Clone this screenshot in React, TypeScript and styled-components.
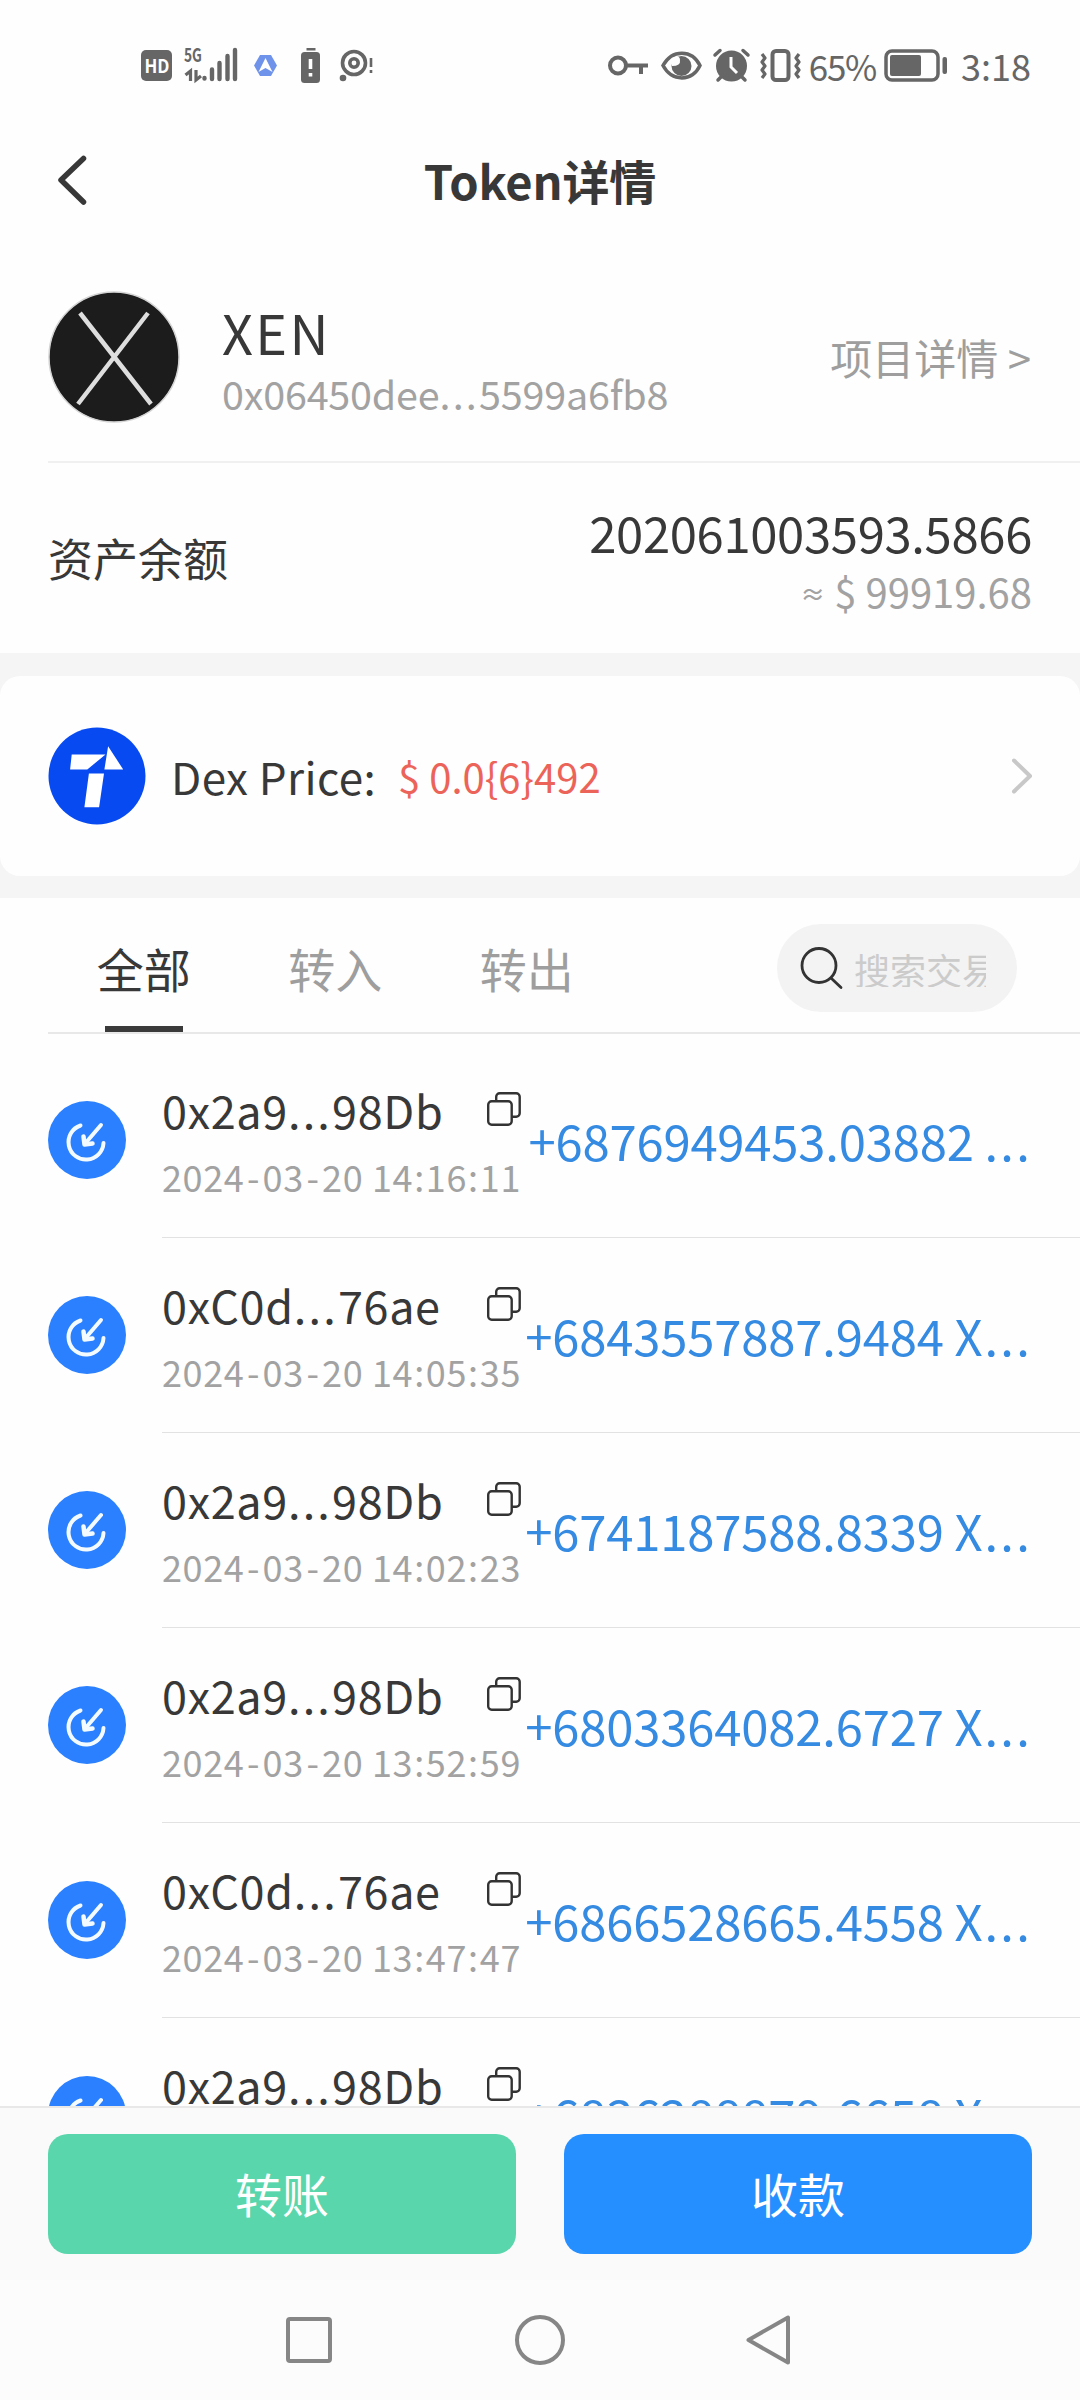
import React from 'react';
import styled, { createGlobalStyle } from 'styled-components';

const Global = createGlobalStyle`
  html, body { margin: 0; padding: 0; background: #fefefe; }
  * { box-sizing: border-box; }
`;

const Screen = styled.div`
  width: 1080px;
  height: 2400px;
  display: flex;
  flex-direction: column;
  overflow: hidden;
  background: #fefefe;
  color: #383838;
  font-family: "Noto Sans CJK SC", "Noto Sans", sans-serif;
  white-space: nowrap;
  svg { display: block; flex: none; overflow: visible; }
`;

const Txt = styled.span<{ $size: number; $ls?: number; $color?: string; $bold?: boolean }>`
  font-size: ${p => p.$size}px;
  line-height: 1;
  letter-spacing: ${p => p.$ls ?? 0}px;
  color: ${p => p.$color ?? '#383838'};
  font-weight: ${p => (p.$bold ? 700 : 400)};
`;

const Dots = styled.span`
  letter-spacing: 2.2px;
`;
const Approx = styled.span`
  font-size: 25px;
  font-weight: 500;
  vertical-align: 4px;
`;
const Separator = styled.span<{ $pad: number }>`
  padding: 0 ${p => p.$pad}px;
`;

const StatusBar = styled.header`
  height: 130px;
  flex: none;
  display: flex;
  justify-content: space-between;
  align-items: center;
  padding: 0 49px 0 140px;
`;
const StatusGroup = styled.div<{ $gap: number }>`
  display: flex;
  align-items: center;
  gap: ${p => p.$gap}px;
`;

const TitleBar = styled.div`
  height: 106px;
  flex: none;
  display: grid;
  grid-template-columns: 120px 1fr 120px;
  align-items: center;
  padding: 0 0 6px;
`;
const BackButton = styled.button`
  border: 0;
  background: none;
  padding: 0 0 0 56px;
`;
const Title = styled.h1`
  margin: 0;
  padding-bottom: 1px;
  display: flex;
  justify-content: center;
`;

const TokenRow = styled.section`
  height: 227px;
  flex: none;
  display: flex;
  align-items: center;
  margin-left: 48px;
  padding: 16px 49px 0 0;
  border-bottom: 2px solid #f0f0f0;
`;
const TokenNames = styled.div`
  display: flex;
  flex-direction: column;
  gap: 14px;
  margin-left: 42px;
  padding-top: 4px;
  flex: 1;
`;
const BalanceRow = styled.section`
  height: 190px;
  flex: none;
  display: flex;
  justify-content: space-between;
  align-items: center;
  padding: 0 48px;
`;
const BalanceLabel = styled.div`
  display: flex;
  padding-bottom: 1px;
`;
const BalanceValues = styled.div`
  display: flex;
  flex-direction: column;
  align-items: flex-end;
  gap: 15px;
  padding-top: 2px;
`;

const DexBand = styled.section`
  background: #f5f5f5;
  padding: 23px 0 22px;
  flex: none;
`;
const DexCard = styled.div`
  height: 200px;
  border-radius: 20px;
  background: #fefefe;
  display: flex;
  align-items: center;
  padding: 0 47px 0 48px;
`;
const DexLabel = styled.div`
  display: flex;
  align-items: center;
  gap: 22px;
  margin-left: 25px;
  padding-bottom: 1px;
  flex: 1;
`;

const FilterBar = styled.nav`
  height: 136px;
  flex: none;
  margin-left: 48px;
  border-bottom: 2px solid #e8e8e8;
  display: flex;
  justify-content: space-between;
  padding-right: 63px;
`;
const Tabs = styled.div`
  display: flex;
`;
const Tab = styled.button<{ $active?: boolean }>`
  width: 191.5px;
  border: 0;
  background: none;
  padding: 46px 0 0;
  font: inherit;
  display: flex;
  flex-direction: column;
  align-items: center;
  justify-content: space-between;
  &::after {
    content: '';
    width: 78px;
    height: 6px;
    background: ${p => (p.$active ? '#3a3a3a' : 'transparent')};
  }
`;
const Search = styled.div`
  width: 240px;
  height: 88px;
  margin-top: 26px;
  border-radius: 44px;
  background: #f3f3f3;
  display: flex;
  align-items: center;
  gap: 11px;
  padding: 1px 30px 0 24px;
`;
const SearchHint = styled.div`
  width: 132px;
  overflow: hidden;
  display: flex;
`;

const List = styled.main`
  flex: 1;
  min-height: 0;
  overflow: hidden;
  padding-top: 9px;
`;
const Item = styled.article`
  height: 195px;
  display: flex;
  align-items: center;
  padding-left: 48px;
`;
const ItemIcon = styled.div`
  padding-bottom: 1px;
`;
const ItemBody = styled.div`
  flex: 1;
  height: 195px;
  margin-left: 36px;
  border-bottom: 1px solid #e2e2e2;
  display: flex;
  justify-content: space-between;
  align-items: center;
  padding-right: 48px;
`;
const ItemInfo = styled.div`
  width: 359px;
  display: flex;
  flex-direction: column;
  gap: 26px;
`;
const ItemHead = styled.div`
  display: flex;
  justify-content: space-between;
  align-items: flex-start;
`;
const ItemAmount = styled.div`
  display: flex;
  padding-bottom: 2px;
`;
const Unit = styled.span`
  letter-spacing: 2px;
`;

const Actions = styled.footer`
  height: 174px;
  flex: none;
  display: flex;
  gap: 48px;
  padding: 26px 48px 0;
  background: #fafafa;
  border-top: 2px solid #e8e8e8;
`;
const ActionButton = styled.button<{ $bg: string }>`
  flex: 1;
  height: 120px;
  border: 0;
  border-radius: 20px;
  background: ${p => p.$bg};
  font-family: inherit;
  padding: 0 0 2px;
`;
const NavBar = styled.div`
  height: 120px;
  flex: none;
  display: flex;
  justify-content: center;
  align-items: center;
  gap: 179px;
  background: #fcfcfc;
`;

const G = '#666';

const StatusLeft = () => (
  <StatusGroup $gap={0}>
    <svg width="240" height="44" viewBox="140 43 240 44" fill={G} fontFamily="Noto Sans CJK SC">
      <rect x="141" y="50" width="31" height="31" rx="5" />
      <text x="144.500" y="73" fontSize="19" fontWeight="700" fill="#fff" textLength="25" lengthAdjust="spacingAndGlyphs">HD</text>
      <text x="184" y="62" fontSize="19" fontWeight="700" textLength="18" lengthAdjust="spacingAndGlyphs">5G</text>
      <path d="M190.500 81V71l-5 4M196 70v10l5-4" fill="none" stroke={G} strokeWidth="3.200" />
      <path d="M204.500 78v.5M212 69.500v9.500M219.500 63v16M227.500 56v23M235 50v29" fill="none" stroke={G} strokeWidth="4.400" strokeLinecap="round" />
      <path d="M260 55h11l6 10.500-6 10.500h-11l-6-10.500z" fill="#6f93ea" />
      <path d="M265.500 58l7 14-7-4-7 4z" fill="#fff" />
      <rect x="306.500" y="48" width="9" height="2.500" />
      <rect x="301" y="52" width="19" height="31" rx="3.500" />
      <path d="M310.500 59v10M310.500 73v3.500" stroke="#fff" strokeWidth="3.600" />
      <circle cx="354" cy="63" r="11.500" fill="none" stroke={G} strokeWidth="3.600" />
      <circle cx="354" cy="63" r="4.200" fill="none" stroke={G} strokeWidth="3.600" />
      <circle cx="343" cy="78" r="3.300" />
      <path d="M371 58v9M371 70v3" stroke={G} strokeWidth="2.600" />
    </svg>
  </StatusGroup>
);

const StatusRight = () => (
  <StatusGroup $gap={9}>
    <svg width="194" height="44" viewBox="607 43 194 44" fill="none" stroke={G} strokeWidth="4">
      <circle cx="619" cy="65.500" r="8" />
      <path d="M627 65.500h22M642 66v8" />
      <path d="M664 65.500C673 49 693 49 701 65.500C693 82 673 82 664 65.500z" strokeWidth="3.500" />
      <circle cx="682.500" cy="66" r="10" fill={G} stroke="none" />
      <path d="M673 58q8-4 8 2q1 6-8 6z" fill="#fefefe" stroke="none" />
      <circle cx="732.500" cy="66" r="15.500" fill={G} stroke="none" />
      <path d="M716 55l5-4.500M749 55l-5-4.500M719 80l5-5M746 80l-5-5" strokeLinecap="round" strokeWidth="3.500" />
      <path d="M732 57v10l6 6" stroke="#fefefe" strokeWidth="3" />
      <rect x="773.500" y="51" width="16" height="29" rx="3.500" />
      <path d="M763 54l3 4-3 4 3 4-3 4 3 4-3 4M800 54l-3 4 3 4-3 4 3 4-3 4 3 4" strokeWidth="3.200" strokeLinejoin="round" />
    </svg>
    <Txt $size={35} $ls={-1.300} $color={G}>65%</Txt>
    <svg width="67" height="44" viewBox="886 43 67 44">
      <rect x="887" y="51" width="52" height="29" rx="6" fill="none" stroke={G} strokeWidth="3.500" />
      <rect x="891" y="55" width="31" height="21" rx="2" fill={G} />
      <rect x="943.500" y="57" width="4.500" height="17" rx="2" fill={G} />
    </svg>
    <Txt $size={36} $color={G}>3:18</Txt>
  </StatusGroup>
);

const ReceiveIcon = () => (
  <svg width="78" height="78" viewBox="0 0 78 78" fill="none" stroke="#f4fbff" strokeWidth="4" strokeLinecap="round">
    <circle cx="39" cy="39" r="39" fill="#2b80ff" stroke="none" />
    <path d="M32.500 24.500A17.500 17.500 0 1 0 55.500 42" />
    <path d="M53 24L38 41.500" />
    <path d="M35.500 35.500L36.500 43.500L44.500 42.500" strokeLinejoin="round" strokeWidth="4.500" />
  </svg>
);

const CopyIcon = () => (
  <svg width="34" height="39" viewBox="0 -5 34 39" fill="none" stroke="#333" strokeWidth="2.400">
    <rect x="1.200" y="9.200" width="23.500" height="23.500" rx="3.500" />
    <path d="M9.200 9V4.700a3.500 3.500 0 0 1 3.500-3.500h16.500a3.500 3.500 0 0 1 3.500 3.500v16.500a3.500 3.500 0 0 1-3.500 3.500H25" />
  </svg>
);

const separatorPad: Record<string, number> = { '-': 2.6, ':': 1.1 };

const Timestamp = ({ value }: { value: string }) => (
  <Txt $size={36} $ls={0.600} $color="#a2a2a2">
    {value.split(/([-:])/).map((part, i) =>
      part in separatorPad ? <Separator key={i} $pad={separatorPad[part]}>{part}</Separator> : part
    )}
  </Txt>
);

const rows = [
  ['0x2a9', '98Db', '2024-03-20 14:16:11', '+6876949453.03882 ', ''],
  ['0xC0d', '76ae', '2024-03-20 14:05:35', '+6843557887.9484 ', 'X'],
  ['0x2a9', '98Db', '2024-03-20 14:02:23', '+6741187588.8339 ', 'X'],
  ['0x2a9', '98Db', '2024-03-20 13:52:59', '+6803364082.6727 ', 'X'],
  ['0xC0d', '76ae', '2024-03-20 13:47:47', '+6866528665.4558 ', 'X'],
  ['0x2a9', '98Db', '2024-03-20 13:42:11', '+6836288879.6658 ', 'X'],
];

export default function App() {
  return (
    <Screen>
      <Global />
      <StatusBar>
        <StatusLeft />
        <StatusRight />
      </StatusBar>
      <TitleBar>
        <BackButton>
          <svg width="32" height="52" viewBox="0 0 32 52" fill="none" stroke="#383838" strokeWidth="5.500" strokeLinecap="round" strokeLinejoin="round">
            <path d="M27.500 4.500L5 26L27.500 48" />
          </svg>
        </BackButton>
        <Title><Txt $size={47} $ls={-0.150} $bold>Token详情</Txt></Title>
      </TitleBar>
      <TokenRow>
        <svg width="132" height="132" viewBox="0 0 132 132">
          <circle cx="66" cy="66" r="65" fill="#1c1c1c" stroke="#d4d4d4" strokeWidth="1.500" />
          <path d="M32 22L103 113M100 22L30 113" stroke="#dedede" strokeWidth="4.500" />
        </svg>
        <TokenNames>
          <Txt $size={54} $ls={2.400}>XEN</Txt>
          <Txt $size={39.500} $ls={-0.200} $color="#a2a2a2">0x06450dee<Dots>...</Dots>5599a6fb8</Txt>
        </TokenNames>
        <Txt $size={42} $color="#9e9e9e">项目详情 &gt;</Txt>
      </TokenRow>
      <BalanceRow>
        <BalanceLabel><Txt $size={45}>资产余额</Txt></BalanceLabel>
        <BalanceValues>
          <Txt $size={49} $ls={-0.350}>202061003593.5866</Txt>
          <Txt $size={40} $color="#a2a2a2"><Approx>≈</Approx> $ 99919.68</Txt>
        </BalanceValues>
      </BalanceRow>
      <DexBand>
        <DexCard>
          <svg width="98" height="98" viewBox="48.500 726.500 98 98">
            <circle cx="97.500" cy="775.500" r="48.500" fill="#074af2" />
            <path d="M72.200 754H106L87.800 769H70.600zM108.600 745.700L123.700 769H104.900zM89.400 773H104.500L99.600 806.700H84.900z" fill="#fff" />
          </svg>
          <DexLabel>
            <Txt $size={44} $ls={0.400}>Dex Price:</Txt>
            <Txt $size={40} $color="#ec6459">$ 0.0&#123;6&#125;492</Txt>
          </DexLabel>
          <svg width="22" height="38" viewBox="0 0 22 38" fill="none" stroke="#c8c8c8" strokeWidth="4" strokeLinecap="round" strokeLinejoin="round">
            <path d="M3 3.500L19 19L3 34.500" />
          </svg>
        </DexCard>
      </DexBand>
      <FilterBar>
        <Tabs>
          <Tab $active><Txt $size={47}>全部</Txt></Tab>
          <Tab><Txt $size={47} $color="#9e9e9e">转入</Txt></Tab>
          <Tab><Txt $size={47} $color="#9e9e9e">转出</Txt></Tab>
        </Tabs>
        <Search>
          <svg width="42" height="42" viewBox="0 0 42 42" fill="none" stroke="#333" strokeWidth="2.800" strokeLinecap="round">
            <circle cx="18" cy="17.500" r="17" />
            <path d="M30.500 30.500L40 39.500" />
          </svg>
          <SearchHint><Txt $size={36} $color="#cbcbcb">搜索交易</Txt></SearchHint>
        </Search>
      </FilterBar>
      <List>
        {rows.map(([head, tail, time, amount, unit], i) => (
          <Item key={i}>
            <ItemIcon><ReceiveIcon /></ItemIcon>
            <ItemBody>
              <ItemInfo>
                <ItemHead>
                  <Txt $size={45} $ls={0.650}>{head}<Dots>...</Dots>{tail}</Txt>
                  <CopyIcon />
                </ItemHead>
                <Timestamp value={time} />
              </ItemInfo>
              <ItemAmount>
                <Txt $size={49} $ls={-0.200} $color="#358ae2">{amount}{unit && <Unit>{unit}</Unit>}<Dots>...</Dots></Txt>
              </ItemAmount>
            </ItemBody>
          </Item>
        ))}
      </List>
      <Actions>
        <ActionButton $bg="#5ad6ac"><Txt $size={47} $color="#fff">转账</Txt></ActionButton>
        <ActionButton $bg="#268fff"><Txt $size={47} $color="#fff">收款</Txt></ActionButton>
      </Actions>
      <NavBar>
        <svg width="52" height="52" viewBox="0 0 52 52" fill="none" stroke="#868686" strokeWidth="4"><rect x="5" y="5" width="42" height="42" rx="2" /></svg>
        <svg width="52" height="52" viewBox="0 0 52 52" fill="none" stroke="#868686" strokeWidth="4"><circle cx="26" cy="26" r="23" /></svg>
        <svg width="52" height="52" viewBox="0 0 52 52" fill="none" stroke="#868686" strokeWidth="4" strokeLinejoin="round"><path d="M43 3.500V48.500L3.500 26z" /></svg>
      </NavBar>
    </Screen>
  );
}
